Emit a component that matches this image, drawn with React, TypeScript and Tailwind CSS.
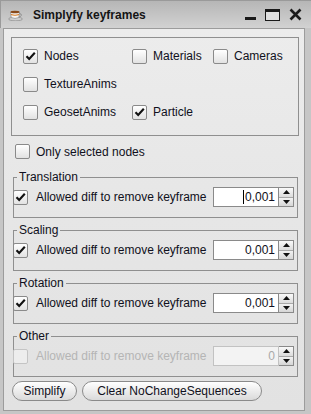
import React from "react";

const font = "font-['Liberation_Sans',Arial,sans-serif]";

function Check({ checked, disabled, className = "" }: { checked?: boolean; disabled?: boolean; className?: string }) {
  return (
    <div
      className={
        "w-[15px] h-[15px] shrink-0 rounded-[2px] border flex items-center justify-center " +
        (disabled
          ? "border-[#c4c4c4] bg-[#ededed] "
          : "border-[#8a8a8a] bg-gradient-to-b from-white to-[#e2e2e2] ") +
        className
      }
    >
      {checked && (
        <svg width="11" height="10" viewBox="0 0 11 10">
          <path d="M1.5 5.2 L4.2 8 L9.8 1.8" fill="none" stroke="#111" strokeWidth="2.1" />
        </svg>
      )}
    </div>
  );
}

function Option({ label, checked }: { label: string; checked?: boolean }) {
  return (
    <div className="flex items-center h-[28px]">
      <Check checked={checked} />
      <span className="ml-[6px] text-[12px] text-[#101020]">{label}</span>
    </div>
  );
}

function Spinner({ value, caret, disabled }: { value: string; caret?: boolean; disabled?: boolean }) {
  return (
    <div className="ml-auto mr-[3px] flex h-[20px]">
      <div
        className={
          "w-[66px] h-full border flex items-center justify-end pr-[3px] text-[12px] " +
          (disabled ? "bg-[#f3f3f3] border-[#c2c2c2] text-[#a9a9a9]" : "bg-white border-[#8a8a8a] text-[#101020]")
        }
      >
        {caret && <span className="inline-block w-px h-[14px] bg-black mr-[1px]" />}
        {value}
      </div>
      <div className="w-[15px] h-full flex flex-col border border-l-0 border-[#8a8a8a]">
        <div className="flex-1 flex items-center justify-center bg-gradient-to-b from-[#fafafa] to-[#dcdcdc] border-b border-[#a8a8a8]">
          <svg width="7" height="4" viewBox="0 0 7 4">
            <path d="M0 4 L3.5 0 L7 4 Z" fill="#111" />
          </svg>
        </div>
        <div className="flex-1 flex items-center justify-center bg-gradient-to-b from-[#f2f2f2] to-[#d6d6d6]">
          <svg width="7" height="4" viewBox="0 0 7 4">
            <path d="M0 0 L7 0 L3.5 4 Z" fill="#111" />
          </svg>
        </div>
      </div>
    </div>
  );
}

function Group({ title, value, caret, disabled, first }: { title: string; value: string; caret?: boolean; disabled?: boolean; first?: boolean }) {
  return (
    <fieldset
      className={
        "ml-[9px] w-[285px] border border-[#8f8f8f] px-0 pt-[3px] pb-[10px] " + (first ? "mt-[11px]" : "mt-[5px]")
      }
    >
      <legend className="ml-[3px] px-[2px] text-[12px] leading-[14px] text-[#101020]">{title}</legend>
      <div className="flex items-center h-[20px]">
        <Check checked={!disabled} disabled={disabled} className="-ml-[1px]" />
        <span className={"ml-[8px] text-[12px] " + (disabled ? "text-[#b5b5b5]" : "text-[#101020]")}>
          Allowed diff to remove keyframe
        </span>
        <Spinner value={value} caret={caret} disabled={disabled} />
      </div>
    </fieldset>
  );
}

export default function App() {
  return (
    <div className={"w-[311px] h-[414px] overflow-hidden bg-[#c6c6c6] " + font}>
      {/* title bar */}
      <div className="h-[28px] flex items-center bg-gradient-to-b from-[#b6b6b6] to-[#d2d2d2] border-t border-l border-[#9a9a9a]">
        <svg className="ml-[7px]" width="15" height="12" viewBox="0 0 15 12">
          <ellipse cx="7.5" cy="10" rx="7" ry="1.8" fill="#cfcfcf" stroke="#8a8a8a" strokeWidth="0.7" />
          <path d="M2.5 3 L3.2 8.5 Q7 10.4 10.8 8.5 L11.5 3 Z" fill="#f6f6f6" stroke="#8a8a8a" strokeWidth="0.7" />
          <path d="M11.3 4.5 Q14 4.5 13.2 6.8 Q12.5 8 11 7.8" fill="none" stroke="#8a8a8a" strokeWidth="0.9" />
          <ellipse cx="7" cy="3" rx="4.5" ry="1.3" fill="#8a4a1a" />
          <path d="M3 5.5 Q7 7 11 5.5" fill="none" stroke="#d87a20" strokeWidth="1.2" />
        </svg>
        <span className="ml-[10px] text-[12px] font-bold text-[#151515]">Simplyfy keyframes</span>
        <div className="ml-auto flex items-center">
          <div className="w-[11px] h-[3px] bg-[#1a1a1a] mt-[8px]" />
          <div className="ml-[9px] w-[15px] h-[12px] border border-t-[3px] border-[#1a1a1a] bg-[#e0e0e0]" />
          <svg className="ml-[9px] mr-[9px]" width="13" height="13" viewBox="0 0 13 13">
            <path d="M1.5 1.5 L11.5 11.5 M11.5 1.5 L1.5 11.5" stroke="#1a1a1a" strokeWidth="2.6" />
          </svg>
        </div>
      </div>

      {/* content */}
      <div className="ml-[3px] w-[302px] h-[383px] border border-[#9c9c9c] bg-gradient-to-b from-[#ececec] via-[#e6e6e6] to-[#e2e2e2] flex flex-col">
        <div className="mt-[8px] ml-[7px] w-[288px] h-[99px] border border-[#8f8f8f] pl-[11px] pt-[4px]">
          <div className="grid grid-cols-[109px_81px_auto]">
            <Option label="Nodes" checked />
            <Option label="Materials" />
            <Option label="Cameras" />
            <Option label="TextureAnims" />
            <div />
            <div />
            <Option label="GeosetAnims" />
            <Option label="Particle" checked />
          </div>
        </div>

        <div className="mt-[8px] ml-[11px] flex items-center h-[15px]">
          <Check />
          <span className="ml-[6px] text-[12px] text-[#101020]">Only selected nodes</span>
        </div>

        <Group title="Translation" value="0,001" caret first />
        <Group title="Scaling" value="0,001" />
        <Group title="Rotation" value="0,001" />
        <Group title="Other" value="0" disabled />

        <div className="mt-[4px] flex">
          <button className="ml-[8px] w-[65px] h-[20px] rounded-[10px] border border-[#8a8a8a] bg-gradient-to-b from-white to-[#dadada] text-[12px] text-[#101020]">
            Simplify
          </button>
          <button className="ml-[5px] w-[180px] h-[20px] rounded-[10px] border border-[#8a8a8a] bg-gradient-to-b from-white to-[#dadada] text-[12px] text-[#101020]">
            Clear NoChangeSequences
          </button>
        </div>
      </div>
    </div>
  );
}
